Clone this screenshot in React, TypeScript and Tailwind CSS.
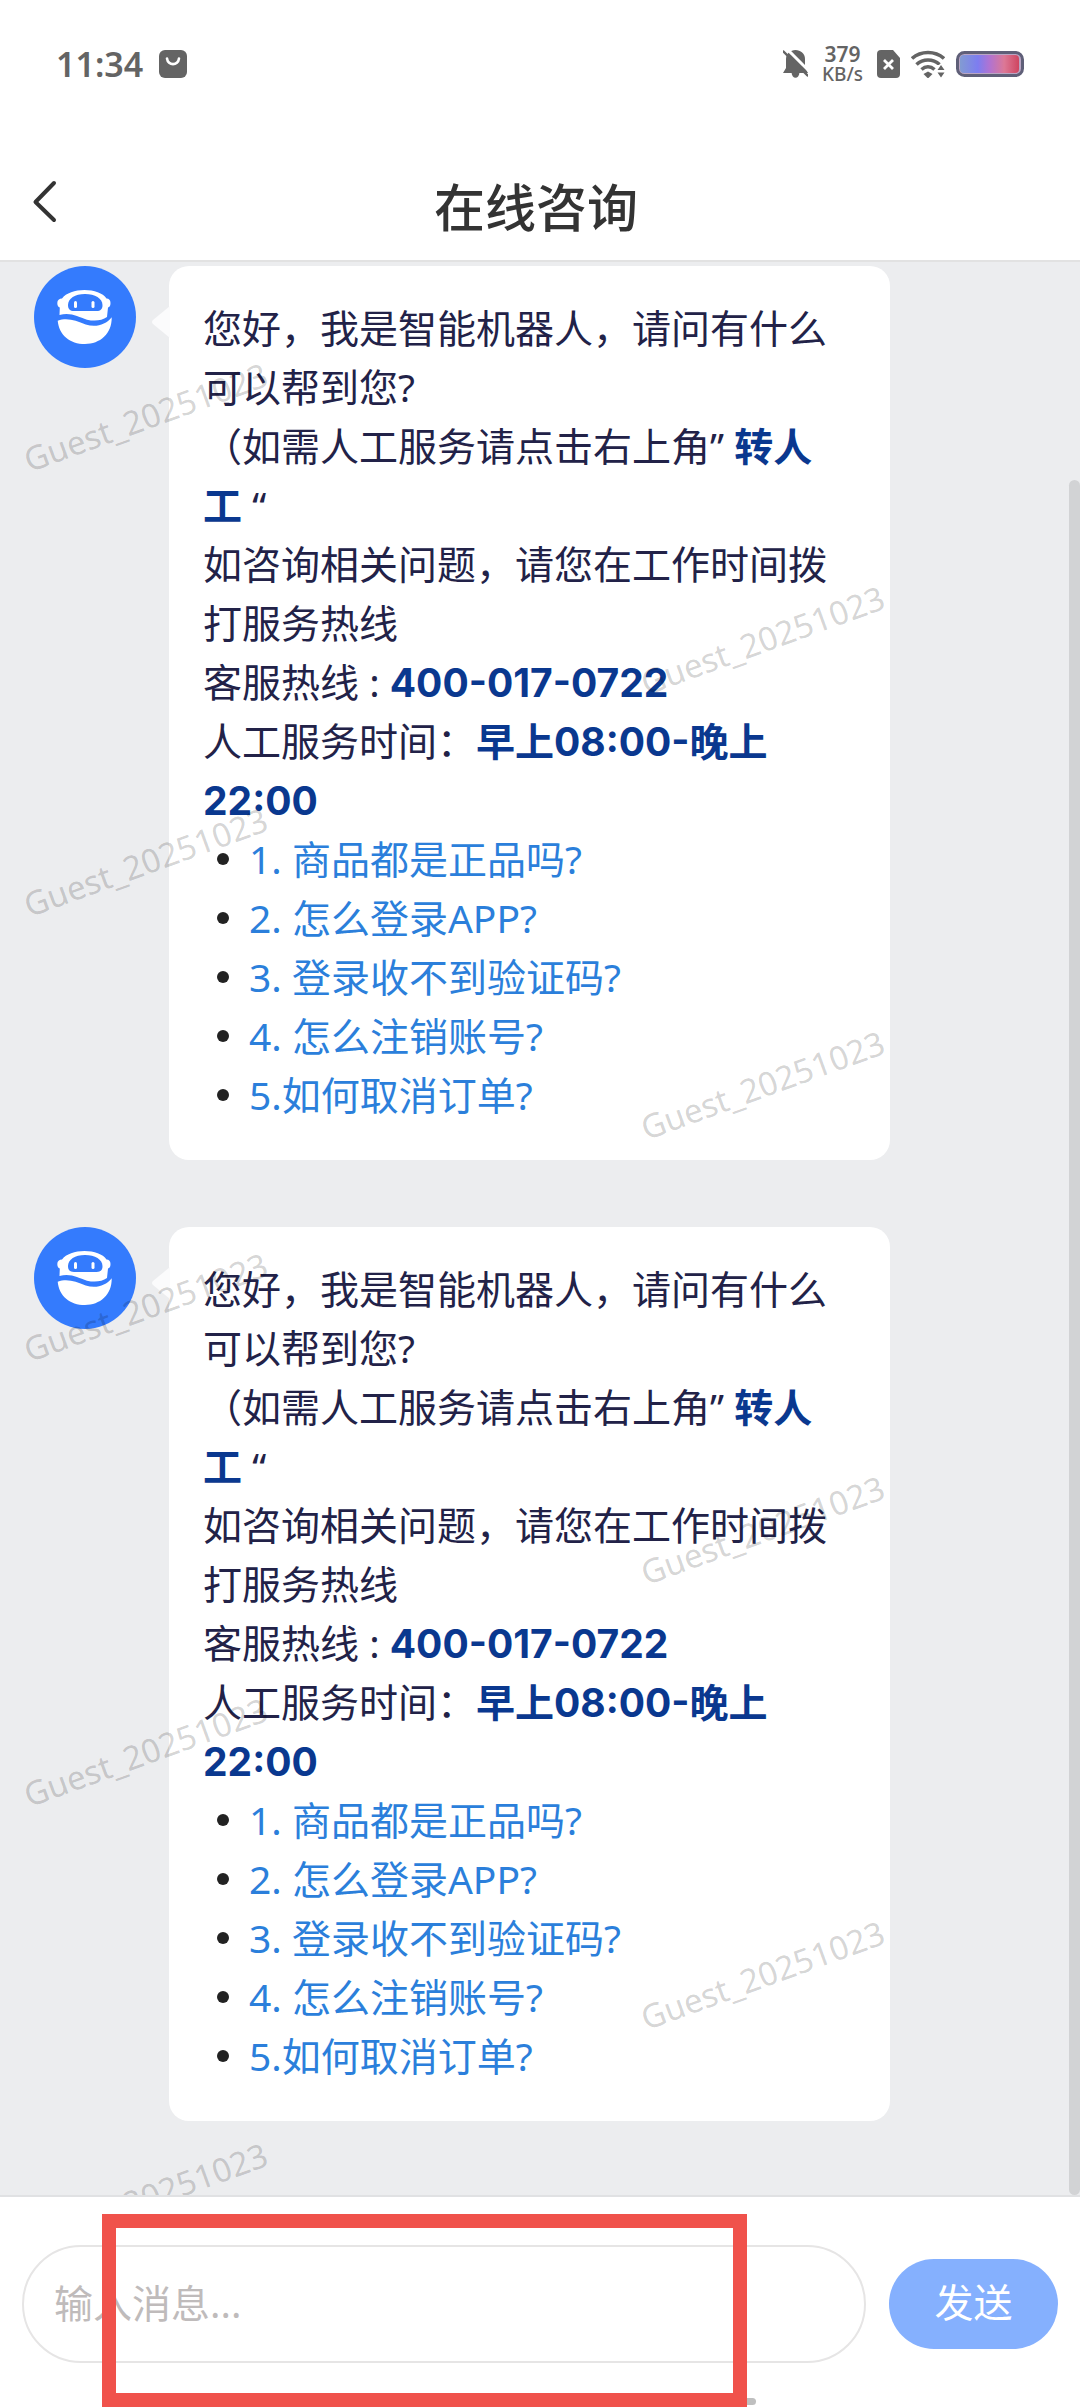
import { useState } from "react";

const FAQS = [
  "1. 商品都是正品吗?",
  "2. 怎么登录APP?",
  "3. 登录收不到验证码?",
  "4. 怎么注销账号?",
  "5.如何取消订单?",
];

const WATERMARK = "Guest_20251023";

function StatusBar() {
  return (
    <div className="flex h-32 items-center justify-between pl-14 pr-14 text-[#646464]">
      <div className="flex items-center gap-4">
        <span className="text-[34px] leading-10 font-semibold">11:34</span>
        <svg className="h-7 w-7" viewBox="0 0 28 28" fill="none">
          <rect width="28" height="28" rx="6" fill="currentColor" />
          <path d="M8 8.500c1 7.500 11 7.500 12 0" stroke="#fff" strokeWidth="2.600" strokeLinecap="round" />
        </svg>
      </div>

      <div className="flex items-center">
        <svg className="mr-[14px] h-7 w-[25px]" viewBox="0 0 25 28">
          <path d="M12.500 0C17.500 0 22 3.500 22 9v8l3 6H0l3-5V9C3 3.500 7.500 0 12.500 0z" fill="currentColor" />
          <path d="M8.500 22.500h8c-.5 7-7.500 7-8 0z" fill="currentColor" />
          <path d="M3-2 30 25" stroke="#fff" strokeWidth="3" />
          <path d="M.5 1.500 24.500 25.500" stroke="currentColor" strokeWidth="2.400" strokeLinecap="round" />
        </svg>
        <div className="mr-[14px] flex flex-col items-center font-medium">
          <span className="text-[21px] leading-5 font-semibold">379</span>
          <span className="text-[19px] leading-5">KB/s</span>
        </div>
        <svg className="mr-[11px] h-7 w-[23px]" viewBox="0 0 23 28">
          <path d="M4 0h12l7 8v16a4 4 0 0 1-4 4H4a4 4 0 0 1-4-4V4a4 4 0 0 1 4-4z" fill="currentColor" />
          <path d="m7 10 9 9m0-9-9 9" stroke="#fff" strokeWidth="2.800" />
        </svg>
        <svg className="mr-[11px] h-7 w-[34px]" viewBox="0 0 34 28" fill="none" stroke="currentColor" strokeWidth="3.600">
          <path d="M1 8.500C10 .5 24 .5 33 8.500" />
          <path d="M5.500 14.500c6.500-6 16.500-6 23 0" />
          <path d="M10.500 19.500c4-3.500 9-3.500 13 0" />
          <path d="m12.500 24 4.500-2.500 4.500 2.500-4.500 4.500z" fill="currentColor" stroke="none" />
          <path d="M26 15h8v13h-8z" fill="#fff" stroke="none" />
          <path d="m30 15 3.500 5h-7zm0 12.500-3.500-5h7z" fill="currentColor" stroke="none" />
        </svg>
        <svg className="h-[26px] w-[68px]" viewBox="0 0 68 26">
          <defs>
            <linearGradient id="charge">
              <stop offset="0" stopColor="#829bd2" />
              <stop offset=".3" stopColor="#7d7df0" />
              <stop offset=".5" stopColor="#b073d2" />
              <stop offset=".75" stopColor="#dc7896" />
              <stop offset="1" stopColor="#cf4560" />
            </linearGradient>
          </defs>
          <rect x="1.500" y="1.500" width="65" height="23" rx="7" fill="#b9a5c3" stroke="#5f5f78" strokeWidth="3" />
          <rect x="4" y="4" width="59" height="18" rx="4" fill="url(#charge)" />
        </svg>
      </div>
    </div>
  );
}

function RobotAvatar() {
  return (
    <svg className="h-[102px] w-[102px] shrink-0" viewBox="0 0 102 102">
      <circle cx="51" cy="51" r="51" fill="#347bfd" />
      <path
        d="M28 32.500C32 27 41 24 50.500 24S69 27 72.500 32.500c2.500 0 4 1.500 4 4.500s-1 4-2.500 4.500l-1 9.500c-5 3.500-12 4.500-20 2.700-9-2.700-16-7.700-27.500-4.700L25.800 41.500c-1.600-.5-2.500-1.800-2.500-4.500 0-3 2-4.500 4.700-4.500z"
        fill="#fff"
      />
      <path d="M34 39c0-6.500 7-11 17-11s17.500 4.500 17.500 11c0 4-2 6-6 6h-22.500c-4 0-6-2-6-6z" fill="#347bfd" />
      <rect x="40" y="35" width="3" height="7" rx="1.500" fill="#fff" />
      <rect x="57.500" y="35" width="3" height="7" rx="1.500" fill="#fff" />
      <path d="M23.700 54.700c10-3.500 18 0 28 3.800 10 3.300 20 .5 26-7.200C78 68 66 78 51 78S25 69 23.700 54.700z" fill="#fff" />
    </svg>
  );
}

function BotMessage() {
  return (
    <article className="flex items-start gap-[33px]">
      <RobotAvatar />
      <div className="relative flex-1 rounded-[20px] bg-white pt-8 pr-11 pb-9 pl-[34px] text-[39px] leading-[59px] text-[#222248]">
        {/* tail */}
        <svg className="absolute top-10 -left-[17px] h-8 w-[18px]" viewBox="0 0 18 32">
          <path d="M18 0v32L1 18q-2-2 0-4z" fill="#fbfbfc" />
        </svg>
        <p>
          您好，我是智能机器人，请问有什么可以帮到您?
          <br />
          （如需人工服务请点击右上角” <strong className="leading-none font-bold text-[#0a388f]">转人工</strong> “
          <br />
          如咨询相关问题，请您在工作时间拨打服务热线
          <br />
          客服热线 :{" "}
          <strong className="font-['Inter','Noto_Sans_CJK_SC',sans-serif] leading-none font-bold text-[#0a388f]">
            400-017-0722
          </strong>
          <br />
          人工服务时间：
          <strong className="font-['Inter','Noto_Sans_CJK_SC',sans-serif] leading-none font-bold text-[#0a388f]">
            早上08:00-晚上22:00
          </strong>
        </p>
        <ul className="pl-[14px]">
          {FAQS.map((q) => (
            <li key={q} className="flex items-center gap-5">
              <span className="h-3 w-3 rounded-full bg-[#222222]" />
              <a href="#" className="text-[#2b7fdb]">
                {q}
              </a>
            </li>
          ))}
        </ul>
      </div>
    </article>
  );
}

function WatermarkLayer() {
  return (
    <div
      aria-hidden="true"
      className="pointer-events-none absolute inset-0 overflow-hidden pl-8 text-[33px] leading-10 text-black/18"
    >
      {[0, 1, 2, 3, 4].map((row) => (
        <div key={row} className="flex h-[445px] gap-[357px]">
          <span className="mt-[178px] h-10 w-[260px] origin-bottom-left -rotate-20">{WATERMARK}</span>
          <span className="mt-[401px] h-10 w-[260px] origin-bottom-left -rotate-20">{WATERMARK}</span>
        </div>
      ))}
    </div>
  );
}

export default function App() {
  const [message, setMessage] = useState("");

  return (
    <div className="relative flex min-h-screen flex-col bg-white font-['Noto_Sans','Noto_Sans_CJK_SC',sans-serif]">
      <header className="border-b-2 border-[#e2e2e2]">
        <StatusBar />
        <div className="relative flex h-[132px] items-center justify-center pt-[26px] pr-2">
          <button type="button" aria-label="返回" className="absolute top-[50px] left-8">
            <svg className="h-12 w-7" viewBox="0 0 28 48" fill="none" stroke="#333" strokeWidth="4" strokeLinecap="round" strokeLinejoin="round">
              <path d="M22 5 3.500 24 22 42" />
            </svg>
          </button>
          <h1 className="text-[51px] leading-[60px] font-medium text-[#333]">在线咨询</h1>
        </div>
      </header>

      <main className="relative flex flex-1 flex-col gap-[67px] bg-[#ecedef] pt-1 pr-[190px] pb-[73px] pl-[34px]">
        <BotMessage />
        <BotMessage />
        <WatermarkLayer />
        {/* scroll thumb */}
        <div className="absolute top-[218px] right-0 bottom-0 w-[11px] rounded-full bg-[#d2d3d5]" />
      </main>

      <footer className="relative border-t-2 border-[#e0e1e3] bg-white px-[22px] pt-12 pb-[45px]">
        <form className="flex items-center gap-[23px]" onSubmit={(e) => e.preventDefault()}>
          <input
            type="text"
            aria-label="输入消息"
            placeholder="输入消息..."
            value={message}
            onChange={(e) => setMessage(e.target.value)}
            className="h-[118px] min-w-0 flex-1 rounded-full border-2 border-[#e6e5e5] px-[30px] pb-1 text-[39px] text-[#222248] outline-none placeholder:text-[#bfbbbb]"
          />
          <button type="submit" className="h-[90px] w-[169px] rounded-full bg-[#85b0fe] pb-1 text-[39px] text-white">
            发送
          </button>
        </form>
        <div className="absolute bottom-[3px] left-1/2 h-[7px] w-[432px] -translate-x-1/2 rounded-full bg-[#bfbfbf]" />
        <div className="pointer-events-none absolute top-[17px] right-[333px] bottom-px left-[102px] border-14 border-[#f0524b]" />
      </footer>
    </div>
  );
}
